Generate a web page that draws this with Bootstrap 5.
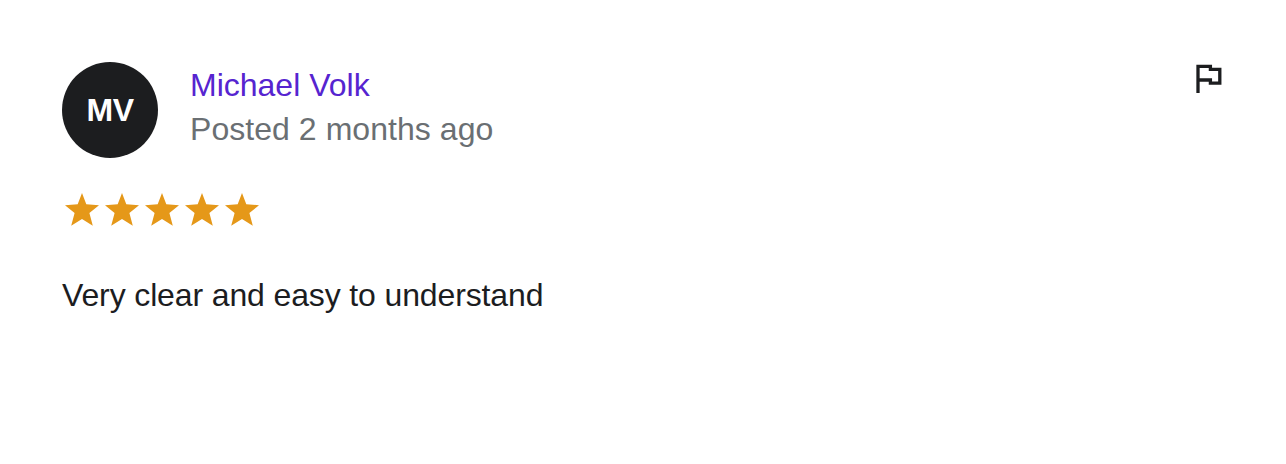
<!DOCTYPE html>
<html lang="en">
<head>
    <meta charset="UTF-8">
    <meta name="viewport" content="width=device-width, initial-scale=1.0">
    <title>Course Review</title>
    <link href="https://cdn.jsdelivr.net/npm/bootstrap@5.3.0/dist/css/bootstrap.min.css" rel="stylesheet">
    <style>
        body {
            font-family: "Liberation Sans", Arial, sans-serif;
            font-size: 32px;
            color: #1c1d1f;
            background-color: #fff;
        }
        .review {
            padding: 62px 60px 0 62px;
        }
        .avatar {
            width: 96px;
            height: 96px;
            background-color: #1c1d1f;
            letter-spacing: -0.5px;
        }
        .author {
            margin-left: 32px;
            padding-top: 1px;
            line-height: 44px;
        }
        .author-name {
            color: #5624d0;
        }
        .posted {
            color: #6a6f73;
            letter-spacing: 0.05px;
        }
        .rating {
            margin-top: 32px;
            height: 40px;
        }
        .rating svg {
            width: 40px;
            height: 40px;
            fill: #e59819;
        }
        .review-text {
            margin-top: 43px;
            line-height: 44px;
            letter-spacing: -0.13px;
        }
        .flag-btn {
            width: 32px;
            height: 32px;
        }
    </style>
</head>
<body>
    <div class="review">
        <!-- Author -->
        <div class="d-flex align-items-start">
            <div class="avatar rounded-circle d-flex align-items-center justify-content-center text-white fw-bold">MV</div>
            <div class="author">
                <div><a href="#" class="author-name text-decoration-none">Michael Volk</a></div>
                <div class="posted">Posted 2 months ago</div>
            </div>
            <button type="button" class="flag-btn btn border-0 p-0 ms-auto d-flex" aria-label="Report review">
                <svg width="32" height="32" viewBox="0 0 32 32" fill="none" stroke="#1c1d1f" stroke-width="3.3"><path d="M4 31V4.4H16.4V7.4H25.8V21.1H16.4V18H4"/></svg>
            </button>
        </div>

        <!-- Rating -->
        <div class="rating d-flex" id="rating"></div>

        <div class="review-text">Very clear and easy to understand</div>
    </div>

    <script src="https://cdn.jsdelivr.net/npm/bootstrap@5.3.0/dist/js/bootstrap.bundle.min.js"></script>
    <script>
        const star = '<svg viewBox="0 0 40 40"><path d="M20 3 24.3 14.2 37 15.3 27.4 23 30.8 35.7 20 29 9.2 35.7 12.6 23 3 15.3 15.7 14.2Z"/></svg>';
        document.getElementById('rating').innerHTML = star.repeat(5);
    </script>
</body>
</html>
